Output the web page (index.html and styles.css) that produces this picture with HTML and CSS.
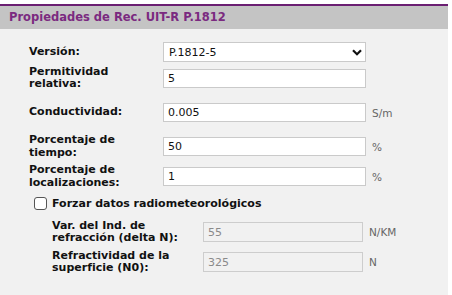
FILE: index.html
```html
<!DOCTYPE html>
<html lang="es">
<head>
<meta charset="utf-8">
<link rel="stylesheet" href="styles.css">
</head>
<body>
<div class="panel">
  <div class="panel-head">Propiedades de Rec. UIT-R P.1812</div>
  <div class="panel-body">
    <div class="row r1">
      <div class="label">Versión:</div>
      <div class="select">
        <span>P.1812-5</span>
        <svg class="chev" width="10" height="7" viewBox="0 0 10 7"><path d="M1 1.2 L5 5.2 L9 1.2" fill="none" stroke="#111" stroke-width="2.2"/></svg>
      </div>
    </div>
    <div class="row r2">
      <div class="label">Permitividad<br>relativa:</div>
      <div class="input">5</div>
    </div>
    <div class="row r3">
      <div class="label">Conductividad:</div>
      <div class="input">0.005</div>
      <div class="unit">S/m</div>
    </div>
    <div class="row r4">
      <div class="label">Porcentaje de<br>tiempo:</div>
      <div class="input">50</div>
      <div class="unit">%</div>
    </div>
    <div class="row r5">
      <div class="label">Porcentaje de<br>localizaciones:</div>
      <div class="input">1</div>
      <div class="unit">%</div>
    </div>
    <div class="row check-row">
      <span class="checkbox"></span>
      <span class="check-label">Forzar datos radiometeorológicos</span>
    </div>
    <div class="row sub r7">
      <div class="label">Var. del Ind. de<br>refracción (delta N):</div>
      <div class="input disabled">55</div>
      <div class="unit">N/KM</div>
    </div>
    <div class="row sub r8">
      <div class="label">Refractividad de la<br>superficie (N0):</div>
      <div class="input disabled">325</div>
      <div class="unit">N</div>
    </div>
  </div>
</div>
</body>
</html>
```
FILE: styles.css
```css
html, body {
  margin: 0;
  padding: 0;
  background: #ffffff;
}
body {
  padding: 4px 4px 0 0;
  font-family: "DejaVu Sans", Verdana, sans-serif;
}
.panel {
  width: 448px;
  height: 291px;
  background: #f1f1f1;
  border-top: 2px solid #6b1f72;
  box-sizing: border-box;
}
.panel-head {
  height: 23px;
  background: #c4c4c4;
  color: #7b2a80;
  font-weight: bold;
  font-size: 11.5px;
  line-height: 23px;
  padding-left: 9px;
}
.panel-body {
  padding-top: 11px;
  display: flex;
  flex-direction: column;
}
.row {
  display: flex;
  align-items: center;
  padding-left: 29px;
}
.label {
  width: 134px;
  flex: none;
  font-weight: bold;
  font-size: 11px;
  line-height: 12.5px;
  color: #111;
}
.select, .input {
  width: 203px;
  height: 19px;
  box-sizing: border-box;
  background: #fff;
  border: 1px solid #cacaca;
  font-size: 11px;
  color: #111;
  padding-left: 4px;
  display: flex;
  align-items: center;
}
.select {
  height: 20px;
  justify-content: space-between;
  padding-left: 5px;
  padding-right: 3px;
}
.chev { margin-top: 1px; }
.unit {
  margin-left: 6px;
  font-size: 10.5px;
  color: #666;
}
.r1 { height: 24px; }
.r2 { height: 28px; }
.r3 { height: 41px; }
.r4 { height: 27px; }
.r5 { height: 33px; }
.check-row { height: 20px; padding-left: 34px; }
.r7 { height: 38px; }
.r8 { height: 22px; }
.checkbox {
  width: 11px;
  height: 11px;
  border: 1px solid #555;
  border-radius: 3px;
  background: #fff;
  margin-right: 5px;
  flex: none;
}
.check-label {
  font-weight: bold;
  font-size: 11px;
  color: #111;
}
.sub { padding-left: 52px; }
.sub .label { width: 151px; }
.input.disabled {
  width: 160px;
  height: 20px;
  background: #f1f1f1;
  border-color: #cdcdcd;
  color: #8a8a8a;
}
```
